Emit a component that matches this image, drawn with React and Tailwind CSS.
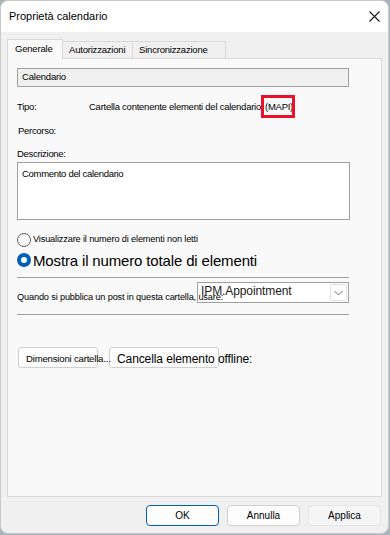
import React from "react";

const font = { fontFamily: '"Liberation Sans", Arial, sans-serif' };

const Tab = ({ label, active, width }) => (
  <div
    className={
      (active
        ? "h-[20px] bg-[#f9f9f9] border border-b-0 border-[#d9d9d9] relative z-10 -mb-px pl-[7px]"
        : "h-[17px] bg-[#f0f0f0] border border-b-0 border-l-0 border-[#d9d9d9] pl-[6px]") +
      " flex items-center text-[9.5px] tracking-[-0.2px] text-black whitespace-nowrap " +
      width
    }
  >
    {label}
  </div>
);

const DialogButton = ({ children, primary, disabled }) => (
  <button
    className={
      "w-[73px] h-[21px] rounded-[4px] text-[10px] flex items-center justify-center " +
      (primary
        ? "bg-[#fdfdfd] border border-[#005fb8] text-black"
        : disabled
        ? "bg-[#f5f5f5] border border-[#e5e5e5] text-black"
        : "bg-[#fdfdfd] border border-[#d0d0d0] text-black")
    }
  >
    {children}
  </button>
);

export default function App() {
  return (
    <div className="w-[390px] h-[535px] bg-[#a9b4bd] overflow-hidden" style={font}>
      <div className="w-[389px] h-[534px] rounded-[8px] border border-[#c9c9c9] bg-[#f0f0f0] overflow-hidden flex flex-col">
        {/* title bar */}
        <div className="h-[31px] bg-white flex items-center justify-between pl-[8px] pr-[8px] shrink-0">
          <span className="text-[11px] text-black">Proprietà calendario</span>
          <svg width="11" height="11" viewBox="0 0 11 11">
            <path d="M0.5 0.5 L10.5 10.5 M10.5 0.5 L0.5 10.5" stroke="#1a1a1a" strokeWidth="1.1" fill="none" />
          </svg>
        </div>

        {/* tabs */}
        <div className="flex items-end pl-[6px] pt-[7px] shrink-0">
          <Tab label="Generale" active width="w-[56px]" />
          <Tab label="Autorizzazioni" width="w-[70px]" />
          <Tab label="Sincronizzazione" width="w-[93px]" />
        </div>

        {/* tab panel */}
        <div className="mx-[6px] h-[439px] bg-[#f9f9f9] border border-[#d9d9d9] pl-[9px] pt-[9px] text-black">
          <div className="w-[332px] h-[19px] bg-[#f0f0f0] border border-[#a0a0a0] flex items-center pl-[4px] text-[9.5px] tracking-[-0.2px]">
            Calendario
          </div>

          <div className="flex items-center mt-[12px] h-[16px] text-[9.5px] tracking-[-0.25px]">
            <span className="w-[72px]">Tipo:</span>
            <span>Cartella contenente elementi del calendario</span>
            <span className="relative ml-[4px]">
              (MAPI)
              <span className="absolute -left-[4px] -right-[2px] -top-[5px] -bottom-[4px] border-[3px] border-[#e8102a]" />
            </span>
          </div>

          <div className="mt-[8px] h-[16px] flex items-center text-[9.5px] tracking-[-0.3px] pl-[1px]">Percorso:</div>

          <div className="mt-[9px] text-[9.5px] tracking-[-0.3px] h-[12px] flex items-center">Descrizione:</div>
          <div className="mt-[2px] w-[333px] h-[58px] bg-white border border-[#a0a0a0] pl-[4px] pt-[4px] text-[9.5px] tracking-[-0.3px]">
            Commento del calendario
          </div>

          <div className="mt-[13px] flex items-center h-[14px]">
            <span className="w-[14px] h-[14px] rounded-full border border-[#5d5d5d] bg-[#f9f9f9] shrink-0" />
            <span className="ml-[2px] text-[9.2px] tracking-[-0.15px] whitespace-nowrap">Visualizzare il numero di elementi non letti</span>
          </div>
          <div className="mt-[5px] flex items-center h-[16px]">
            <span className="w-[14px] h-[14px] rounded-full bg-[#005fb8] flex items-center justify-center shrink-0">
              <span className="w-[6px] h-[6px] rounded-full bg-white" />
            </span>
            <span className="ml-[2px] text-[15px] tracking-[-0.15px] leading-none">Mostra il numero totale di elementi</span>
          </div>

          <div className="mt-[9px] w-[332px] h-px bg-[#a0a0a0]" />

          <div className="flex items-center h-[36px] w-[332px]">
            <span className="relative z-10 w-[180px] shrink-0 whitespace-nowrap pt-[3px] text-[9.2px] tracking-[-0.15px]">
              Quando si pubblica un post in questa cartella, usare:
            </span>
            <div className="mb-[7px] w-[152px] h-[21px] bg-white border border-[#a0a0a0] flex items-center">
              <span className="pl-[3px] pb-[4px] text-[12px] tracking-[-0.1px] leading-none flex-1 text-[#1b1b1b] relative z-20">IPM.Appointment</span>
              <span className="w-[17px] h-[17px] mr-[1px] border border-[#e0e0e0] rounded-[2px] flex items-center justify-center">
                <svg width="9" height="6" viewBox="0 0 9 6">
                  <path d="M0.5 1 L4.5 5 L8.5 1" stroke="#606060" strokeWidth="0.9" fill="none" />
                </svg>
              </span>
            </div>
          </div>

          <div className="w-[332px] h-px bg-[#a0a0a0]" />

          <div className="mt-[32px] flex items-center">
            <div className="relative z-20 ml-[1px] w-[80px] h-[21px]">
              <button className="absolute inset-0 rounded-[3px] border border-[#d0d0d0] bg-[#fdfdfd]" />
              <span className="relative block whitespace-nowrap pl-[8px] pt-[7px] text-[9.6px] tracking-[-0.2px] leading-none">
                Dimensioni cartella...
              </span>
            </div>
            <div className="relative ml-[11px] h-[21px]">
              <button className="absolute left-0 top-0 w-[110px] h-[21px] rounded-[3px] border border-[#d0d0d0] bg-[#fdfdfd]" />
              <span className="relative block text-[12px] tracking-[-0.1px] leading-none whitespace-nowrap pl-[8px] pt-[6px]">
                Cancella elemento offline:
              </span>
            </div>
          </div>
        </div>

        {/* footer */}
        <div className="flex justify-end gap-[8px] pr-[7px] pt-[8px]">
          <DialogButton primary>OK</DialogButton>
          <DialogButton>Annulla</DialogButton>
          <DialogButton disabled>Applica</DialogButton>
        </div>
      </div>
    </div>
  );
}
